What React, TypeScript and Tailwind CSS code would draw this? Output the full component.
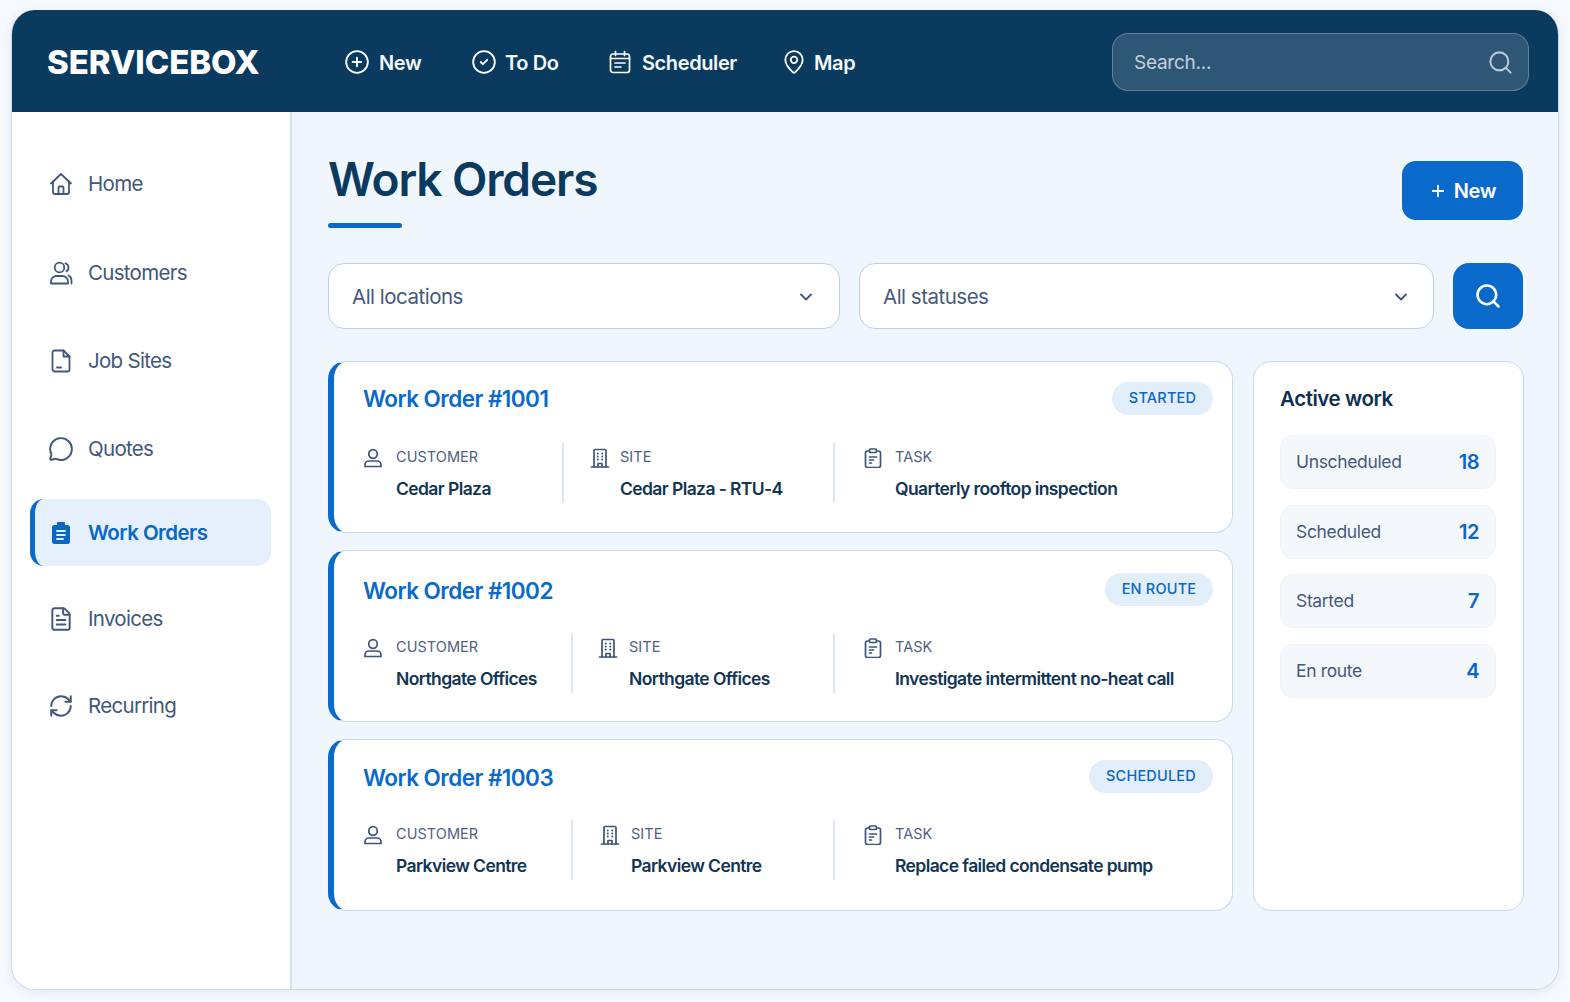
import React from "react";
import { CirclePlus, CircleCheck, MapPin, Search, ChevronDown, MessageCircle, FileText, RefreshCw, Plus } from "lucide-react";

type IconProps = { className?: string; strokeWidth?: number };

const Svg = ({ className = "", strokeWidth = 1.9, children, viewBox = "0 0 24 24" }: IconProps & { children: React.ReactNode; viewBox?: string }) => (
  <svg viewBox={viewBox} fill="none" stroke="currentColor" strokeWidth={strokeWidth} strokeLinecap="round" strokeLinejoin="round" className={className}>
    {children}
  </svg>
);

const HomeIcon = (p: IconProps) => (
  <Svg {...p}>
    <path d="M2 11.500 12 2l10 9.500" />
    <path d="M4 9.500V20a2 2 0 0 0 2 2h12a2 2 0 0 0 2-2V9.500" />
    <path d="M9.500 22v-6.500a1 1 0 0 1 1-1h3a1 1 0 0 1 1 1V22" />
  </Svg>
);

const UsersIcon = (p: IconProps) => (
  <Svg {...p}>
    <circle cx="10.500" cy="6.500" r="4.800" />
    <path d="M2 22.500v-2a5.500 5.500 0 0 1 5.500-5.500h6a5.500 5.500 0 0 1 5.500 5.500v2z" />
    <path d="M16.500 2.300a4.500 4.500 0 0 1 1 8" />
    <path d="M19.500 14.500a5.500 5.500 0 0 1 3 5v3" />
  </Svg>
);

const JobSite = (p: IconProps) => (
  <Svg {...p}>
    <path d="M5.500 1.500h9l6 6v13a2 2 0 0 1-2 2h-13a2 2 0 0 1-2-2v-17a2 2 0 0 1 2-2z" />
    <path d="M14.500 1.500v6h6" />
    <path d="M8 18.500h4" />
  </Svg>
);

const ClipFilled = ({ className = "" }: IconProps) => (
  <svg viewBox="0 0 24 24" className={className}>
    <path fill="currentColor" d="M9 1h6a1 1 0 0 1 1 1v2h2.500A2.500 2.500 0 0 1 21 6.500v14a2.500 2.500 0 0 1-2.500 2.500h-13A2.500 2.500 0 0 1 3 20.500v-14A2.500 2.500 0 0 1 5.500 4H8V2a1 1 0 0 1 1-1z" />
    <path stroke="#e8f1fd" strokeWidth="1.800" strokeLinecap="round" d="M8 10h8M8 14h8M8 18h6" />
  </svg>
);

const SchedulerIcon = (p: IconProps) => (
  <Svg {...p}>
    <rect x="2.500" y="4" width="19" height="18.500" rx="2.500" />
    <path d="M7.500 1.500v4M16.500 1.500v4M2.500 8.500h19M7 13h10M7 17h6" />
  </Svg>
);

const PersonIcon = (p: IconProps) => (
  <Svg {...p} viewBox="0 0 20 20">
    <circle cx="10" cy="6" r="4.300" />
    <path d="M2 18.500V17a4 4 0 0 1 4-4h8a4 4 0 0 1 4 4v1.500z" />
  </Svg>
);

const BuildingIcon = (p: IconProps) => (
  <Svg {...p} viewBox="0 0 20 20">
    <path d="M4 19V2.500a1 1 0 0 1 1-1h10a1 1 0 0 1 1 1V19" />
    <path d="M1.500 19h17" />
    <path d="M8 19v-3.500h4V19" />
    <path d="M7.800 5.500h.01M12.200 5.500h.01M7.800 8.500h.01M12.200 8.500h.01M7.800 11.500h.01M12.200 11.500h.01" strokeWidth={2} />
  </Svg>
);

const TaskIcon = (p: IconProps) => (
  <Svg {...p} viewBox="0 0 20 20">
    <rect x="6.500" y="1" width="7" height="3.500" rx="1" />
    <path d="M6.500 3H4.500a2 2 0 0 0-2 2v12.500a2 2 0 0 0 2 2h11a2 2 0 0 0 2-2V5a2 2 0 0 0-2-2h-2" />
    <path d="M6.500 9h7M6.500 12h4M6.500 15h2" />
  </Svg>
);

const side = [
  { label: "Home", Icon: HomeIcon, mt: "mt-0", cls: "w-[24px] h-[24px]" },
  { label: "Customers", Icon: UsersIcon, mt: "mt-[22px]", cls: "w-[24px] h-[24px]" },
  { label: "Job Sites", Icon: JobSite, mt: "mt-[21px]", cls: "w-[24px] h-[24px]" },
  { label: "Quotes", Icon: MessageCircle, mt: "mt-[21px]", cls: "w-[26px] h-[26px] -m-[1px]" },
  { label: "Work Orders", Icon: ClipFilled, mt: "mt-[17px]", cls: "w-[24px] h-[24px]", active: true },
  { label: "Invoices", Icon: FileText, mt: "mt-[19px]", cls: "w-[26px] h-[26px] -m-[1px]" },
  { label: "Recurring", Icon: RefreshCw, mt: "mt-[20px]", cls: "w-[26px] h-[26px] -m-[1px]" },
];

const top = [
  { label: "New", Icon: CirclePlus, cls: "w-[127px] gap-[9px]", ic: "w-[26px] h-[26px]" },
  { label: "To Do", Icon: CircleCheck, cls: "w-[136px] gap-[8px]", ic: "w-[26px] h-[26px]" },
  { label: "Scheduler", Icon: SchedulerIcon, cls: "w-[174px] gap-[10px]", ic: "w-[24px] h-[24px] ml-[1px]" },
  { label: "Map", Icon: MapPin, cls: "w-[80px] gap-[7px]", ic: "w-[26px] h-[26px]" },
];

const orders = [
  { n: "1001", status: "STARTED", customer: "Cedar Plaza", site: "Cedar Plaza - RTU-4", task: "Quarterly rooftop inspection", pt: "pt-[20px]", badgeMt: "-mt-[2px]", gap: "mt-[27px]", col1: "w-[199px]", sitePl: "pl-[26px]", siteGap: "gap-[10px]", badge: "w-[101px]" },
  { n: "1002", status: "EN ROUTE", customer: "Northgate Offices", site: "Northgate Offices", task: "Investigate intermittent no-heat call", pt: "pt-[23px]", badgeMt: "-mt-[4px]", gap: "mt-[25px]", col1: "w-[208px]", sitePl: "pl-[25px]", siteGap: "gap-[11px]", badge: "w-[108px]" },
  { n: "1003", status: "SCHEDULED", customer: "Parkview Centre", site: "Parkview Centre", task: "Replace failed condensate pump", pt: "pt-[21px]", badgeMt: "-mt-[4px]", gap: "mt-[25px]", col1: "w-[208px]", sitePl: "pl-[27px]", siteGap: "gap-[11px]", badge: "w-[124px]" },
];

const stats = [
  { label: "Unscheduled", v: "18" },
  { label: "Scheduled", v: "12" },
  { label: "Started", v: "7" },
  { label: "En route", v: "4" },
];

function Field({ Icon, label, value, gap }: { Icon: any; label: string; value: string; gap: string }) {
  return (
    <div className={`flex ${gap}`}>
      <Icon className="w-[20px] h-[20px] mt-[5px] shrink-0 text-[#3f5479]" strokeWidth={1.7} />
      <div className="pt-[3px]">
        <div className="text-[14.500px] leading-[22px] text-[#51617f] tracking-[0.05px]">{label}</div>
        <div className="mt-[10px] text-[17.500px] leading-[22px] font-semibold text-[#123555] tracking-[-0.6px] whitespace-nowrap">{value}</div>
      </div>
    </div>
  );
}

export default function App() {
  return (
    <div className="w-[1570px] h-[1002px] overflow-hidden bg-[#f6f9fd] pt-[10px] pl-[11px] font-['Inter',sans-serif]">
      <div className="w-[1548px] h-[980px] rounded-[24px] overflow-hidden flex flex-col border border-t-0 border-[#c9daed] shadow-[0_2px_10px_rgba(60,100,150,0.10)]">
        <header className="h-[102px] -mx-px shrink-0 bg-[#0a3a5e] flex items-center pt-[2px] pl-[36px] pr-[30px]">
          <div className="w-[297px] text-[33px] font-extrabold text-white tracking-[-0.05px] whitespace-nowrap pt-[2px]">SERVICEBOX</div>
          <nav className="flex items-center">
            {top.map(({ label, Icon, cls, ic }) => (
              <div key={label} className={`flex items-center text-white ${cls}`}>
                <Icon className={ic} strokeWidth={1.7} />
                <span className="text-[20px] font-semibold tracking-[-0.4px] text-[#f5f8fb] pt-[1px]">{label}</span>
              </div>
            ))}
          </nav>
          <div className="ml-auto w-[417px] h-[58px] rounded-[16px] bg-white/15 border border-white/25 flex items-center justify-between pl-[21px] pr-[14px]">
            <span className="text-[19px] text-[#c3d0dc] tracking-[-0.25px] pt-[3px]">Search...</span>
            <Search className="w-[27px] h-[27px] text-[#b9c9d6]" strokeWidth={1.8} />
          </div>
        </header>
        <div className="flex flex-1 min-h-0">
          <aside className="w-[280px] shrink-0 bg-white border-r-[2px] border-[#d3e1f0] pt-[38px] pl-[18px] pr-[19px]">
            {side.map(({ label, Icon, mt, active, cls }) => (
              <div key={label} className={`${mt} h-[67px] flex items-center gap-[15px] rounded-[14px] ${active ? "bg-[#e6f0fc] border-l-[5px] border-[#0a6acb] pl-[14px] text-[#0a67c4]" : "pl-[19px] text-[#43577a]"}`}>
                <Icon className={`${cls} shrink-0`} strokeWidth={1.8} />
                <span className={`text-[20.500px] mt-[1px] ${active ? "font-semibold tracking-[-0.55px]" : "tracking-[-0.7px]"}`}>{label}</span>
              </div>
            ))}
          </aside>
          <main className="flex-1 bg-[#f0f6fe] pt-[39px] pl-[36px] pr-[34px]">
            <div className="flex justify-between items-start">
              <div>
                <h1 className="text-[46px] leading-[56px] font-semibold text-[#0a3a5e] tracking-[-1.1px]">Work Orders</h1>
                <div className="mt-[16px] w-[74px] h-[5px] rounded-full bg-[#0a6acb]" />
              </div>
              <button className="mt-[10px] mr-[1px] w-[121px] h-[59px] rounded-[14px] bg-[#0a6acb] text-white flex items-center justify-center gap-[7px] text-[20px] font-semibold tracking-[-0.3px]">
                <Plus className="w-[18px] h-[18px]" strokeWidth={2.4} />
                New
              </button>
            </div>
            <div className="mt-[35px] flex h-[66px]">
              <div className="w-[512px] rounded-[16px] bg-white border-[1.500px] border-[#bfd0e6] flex items-center justify-between pl-[23px] pr-[23px] text-[20.500px] text-[#47597a] tracking-[-0.5px]">
                <span className="pt-[3px]">All locations</span>
                <ChevronDown className="w-[20px] h-[20px] mt-[1px] text-[#3f5479]" strokeWidth={2.2} />
              </div>
              <div className="ml-[19px] w-[575px] rounded-[16px] bg-white border-[1.500px] border-[#bfd0e6] flex items-center justify-between pl-[23px] pr-[22px] text-[20.500px] text-[#47597a] tracking-[-0.5px]">
                <span className="pt-[3px]">All statuses</span>
                <ChevronDown className="w-[20px] h-[20px] mt-[1px] text-[#3f5479]" strokeWidth={2.2} />
              </div>
              <button className="ml-[19px] w-[70px] rounded-[16px] bg-[#0a6acb] text-white flex items-center justify-center">
                <Search className="w-[28px] h-[28px]" strokeWidth={2.2} />
              </button>
            </div>
            <div className="mt-[32px] flex gap-[20px]">
              <div className="w-[905px] flex flex-col gap-[17px]">
                {orders.map((o) => (
                  <div key={o.n} className={`h-[172px] rounded-[18px] bg-white border-[1.500px] border-l-[6px] border-[#c4d9ee] border-l-[#0a6acb] pl-[29px] pr-[19px] ${o.pt}`}>
                    <div className="flex items-center justify-between h-[34px]">
                      <div className="text-[22.500px] font-semibold text-[#0a6acb] tracking-[-0.55px]">Work Order #{o.n}</div>
                      <div className={`${o.badge} ${o.badgeMt} h-[33px] rounded-full bg-[#e3eefb] flex items-center justify-center text-[14.500px] font-medium text-[#0a67c4] tracking-[0.2px]`}>{o.status}</div>
                    </div>
                    <div className={`${o.gap} flex h-[60px]`}>
                      <div className={`${o.col1} shrink-0`}>
                        <Field Icon={PersonIcon} label="CUSTOMER" value={o.customer} gap="gap-[13px]" />
                      </div>
                      <div className="w-[2px] shrink-0 bg-[#dde6f2]" />
                      <div className={`flex-1 ${o.sitePl}`}>
                        <Field Icon={BuildingIcon} label="SITE" value={o.site} gap={o.siteGap} />
                      </div>
                      <div className="w-[2px] shrink-0 bg-[#dde6f2]" />
                      <div className="w-[378px] shrink-0 pl-[28px]">
                        <Field Icon={TaskIcon} label="TASK" value={o.task} gap="gap-[12px]" />
                      </div>
                    </div>
                  </div>
                ))}
              </div>
              <div className="w-[271px] h-[550px] rounded-[18px] bg-white border-[1.500px] border-[#c4d9ee] pl-[26px] pr-[27px] pt-[22px]">
                <h2 className="text-[20.500px] leading-[30px] font-semibold text-[#0f2f50] tracking-[-0.45px]">Active work</h2>
                <div className="mt-[21px] flex flex-col gap-[15.500px]">
                  {stats.map((s) => (
                    <div key={s.label} className="h-[54px] rounded-[13px] bg-[#f4f8fd] border border-[#eef3fa] flex items-center justify-between pl-[15px] pr-[16px]">
                      <span className="text-[17.500px] text-[#47597a] tracking-[-0.35px] pt-[1px]">{s.label}</span>
                      <span className="text-[20px] font-semibold text-[#0a67c4] tracking-[-0.5px]">{s.v}</span>
                    </div>
                  ))}
                </div>
              </div>
            </div>
          </main>
        </div>
      </div>
    </div>
  );
}
